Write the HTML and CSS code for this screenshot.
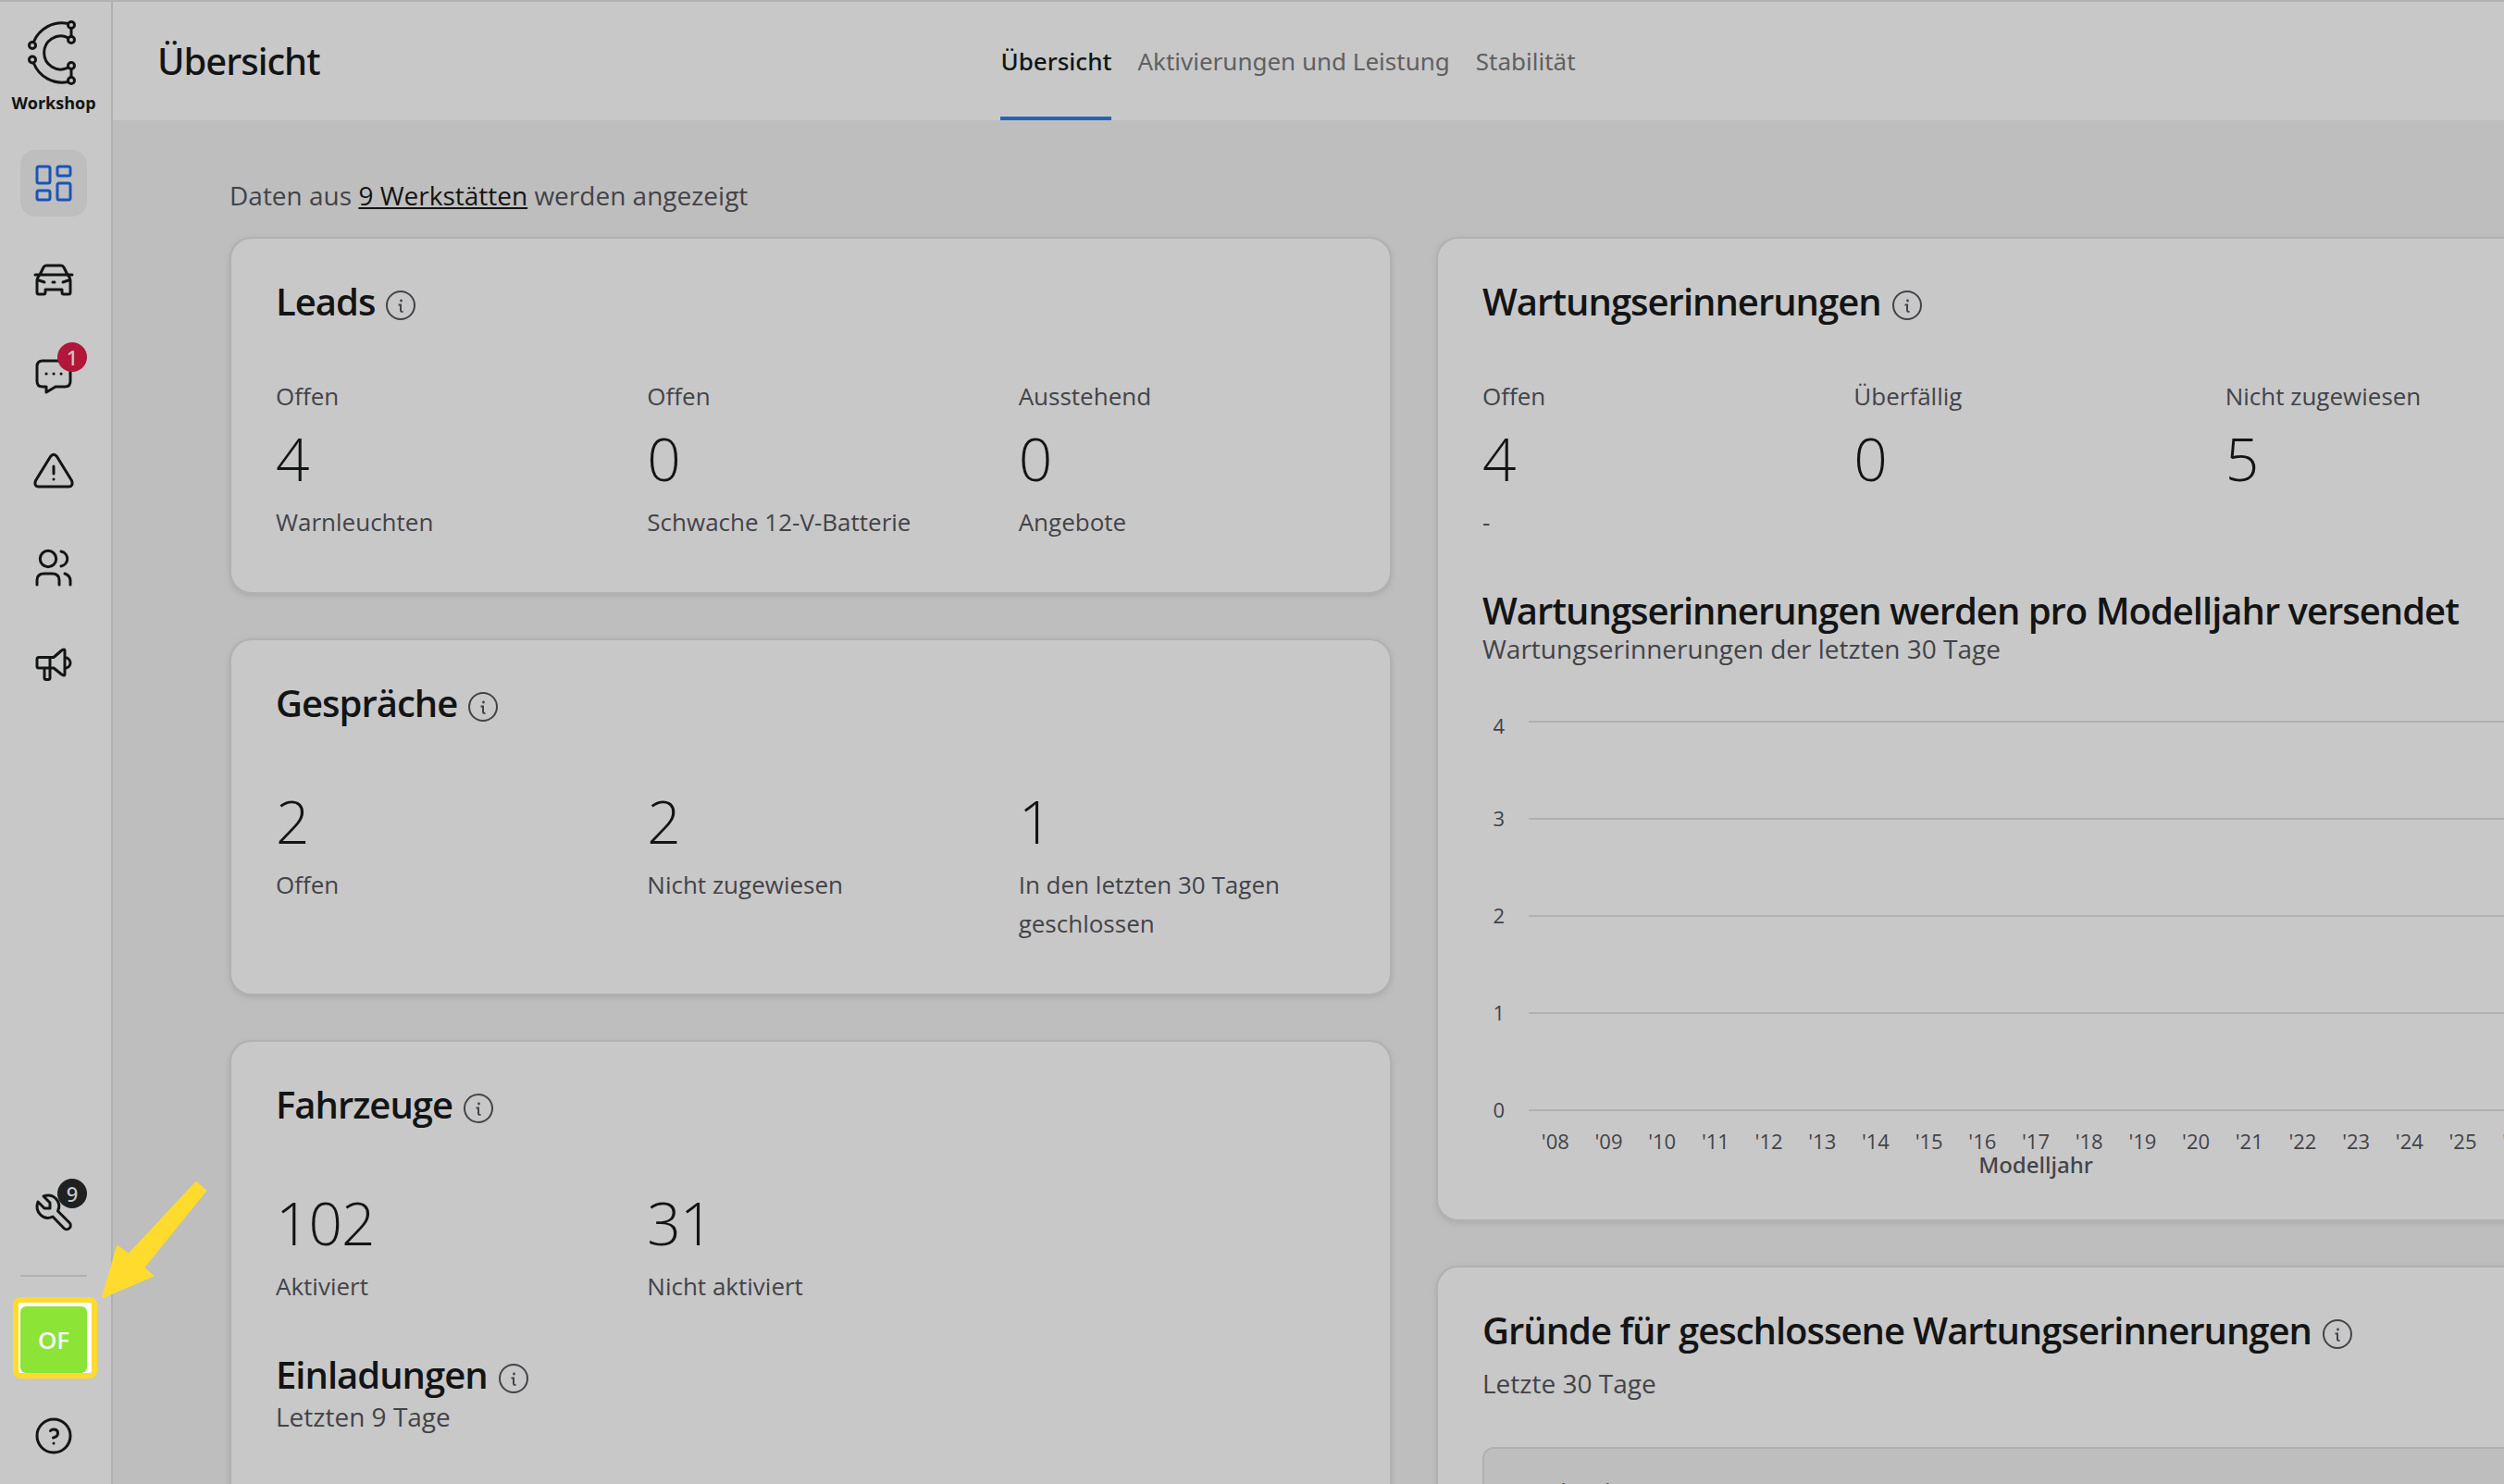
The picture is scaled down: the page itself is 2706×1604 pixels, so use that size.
FILE: index.html
```html
<!DOCTYPE html>
<html lang="de">
<head>
    <meta charset="utf-8">
    <title>Workshop - Übersicht</title>
    <link rel="stylesheet" href="styles.css">
</head>
<body>
    <!-- Icons used more than once -->
    <svg class="sprite" aria-hidden="true">
        <symbol id="info" viewBox="0 0 32 32">
            <circle cx="16" cy="16" r="15" fill="none" stroke="currentColor" stroke-width="2"/>
            <path d="M13.5 15.500h2.500v6q0 1.500 2.500 1.500" fill="none" stroke="currentColor" stroke-width="2"/>
            <circle cx="16.500" cy="11" r="1.400" fill="currentColor"/>
        </symbol>
    </svg>

    <nav class="sidebar">
        <a class="logo" href="#">
            <svg width="56" height="72" viewBox="0 0 56 72" fill="none" stroke="currentColor" stroke-width="3">
                <path d="M6.500 23A33 33 0 0 1 43.500 3.500M6.500 46.500A33 33 0 0 0 43.500 66.500M43.500 18.800A18 18 0 1 0 43.500 51.200M47 8.500v9M47 52.500v9"/>
                <circle cx="47" cy="5" r="3.500"/>
                <circle cx="47" cy="21" r="3.500"/>
                <circle cx="5" cy="27" r="3.500"/>
                <circle cx="5" cy="42.500" r="3.500"/>
                <circle cx="47" cy="49" r="3.500"/>
                <circle cx="47" cy="65" r="3.500"/>
            </svg>
            Workshop
        </a>

        <a class="nav-item active" href="#" aria-label="Übersicht">
            <svg viewBox="0 0 48 48">
                <rect x="6" y="6" width="14" height="18" rx="2"/>
                <rect x="28" y="6" width="14" height="10" rx="2"/>
                <rect x="6" y="32" width="14" height="10" rx="2"/>
                <rect x="28" y="24" width="14" height="18" rx="2"/>
            </svg>
        </a>
        <a class="nav-item" href="#" aria-label="Fahrzeuge">
            <svg viewBox="0 0 48 48">
                <path d="M4 19h40M9 19l4-8q1-2 3-2h16q2 0 3 2l4 8M9 19q-3 3-3 7v12q0 2 2 2h5q2 0 2-2v-3h18v3q0 2 2 2h5q2 0 2-2V26q0-4-3-7M8 25l6 2M40 25l-6 2M23 27h2"/>
            </svg>
        </a>
        <a class="nav-item" href="#" aria-label="Gespräche">
            <svg viewBox="0 0 48 48">
                <path d="M12 8h24q6 0 6 6v16q0 6-6 6H26l-10 6v-6h-4q-6 0-6-6V14q0-6 6-6z"/>
                <path d="M16 22h.1M24 22h.1M32 22h.1"/>
            </svg>
            <span class="badge badge-red">1</span>
        </a>
        <a class="nav-item" href="#" aria-label="Warnungen">
            <svg viewBox="0 0 48 48">
                <path d="M20.500 7.500q3.500-4.500 7 0l16 26q2 6-3 6.500h-33q-5-.5-3-6.500z"/>
                <path d="M24 18v8M24 32v.1"/>
            </svg>
        </a>
        <a class="nav-item" href="#" aria-label="Kunden">
            <svg viewBox="0 0 48 48">
                <circle cx="18" cy="14" r="8.700"/>
                <path d="M6 42v-5q0-7 8-7h8q8 0 8 7v5M32 6c9 2 9 14 0 16M36 30q6 2 6 8v4"/>
            </svg>
        </a>
        <a class="nav-item" href="#" aria-label="Kampagnen">
            <svg viewBox="0 0 48 48">
                <path d="M8 16.500h16l8-7q4-3 4 0v25q0 3-4 0l-8-6.500H8q-2 0-2-2v-7.500q0-2 2-2zM20 16.500v11.500M14 28v10.500q0 2 2 2h2q2 0 2-2V28M36 16.500c8 1 8 11 0 12"/>
            </svg>
        </a>

        <a class="nav-item tools" href="#" aria-label="Werkstatt">
            <svg viewBox="0 0 48 48">
                <path d="M13 7C24 3 33 13 28.500 23L41 35.500a4.200 4.200 0 0 1-6 6L23 29C13 34 3 24 7 13l7 7h6v-6z"/>
            </svg>
            <span class="badge">9</span>
        </a>
        <hr>
        <div class="account">
            <button class="avatar">OF</button>
        </div>
        <a class="nav-item" href="#" aria-label="Hilfe">
            <svg viewBox="0 0 48 48">
                <circle cx="24" cy="24" r="18"/>
                <path d="M20.500 18.500q1-1.500 3.500-1.500 4.500 0 4.500 4t-5 5M24 32v.1"/>
            </svg>
        </a>

        <!-- Pointer to the account button -->
        <svg class="arrow" viewBox="0 0 114 126">
            <path d="M102 1 112 10 45 93 55 102 1 125 17 70 29 79z"/>
        </svg>
    </nav>

    <div class="page">
        <header class="topbar">
            <h1>Übersicht</h1>
            <nav class="tabs">
                <a class="tab selected" href="#">Übersicht</a>
                <a class="tab" href="#">Aktivierungen und Leistung</a>
                <a class="tab" href="#">Stabilität</a>
            </nav>
        </header>

        <main>
            <p class="source">Daten aus <a href="#">9 Werkstätten</a> werden angezeigt</p>

            <div class="columns">
                <div class="column">
                    <section class="card">
                        <h2>Leads <svg class="info"><use href="#info"/></svg></h2>
                        <div class="stats">
                            <div><p>Offen</p><strong>4</strong><p>Warnleuchten</p></div>
                            <div><p>Offen</p><strong>0</strong><p>Schwache 12-V-Batterie</p></div>
                            <div><p>Ausstehend</p><strong>0</strong><p>Angebote</p></div>
                        </div>
                    </section>

                    <section class="card">
                        <h2>Gespräche <svg class="info"><use href="#info"/></svg></h2>
                        <div class="stats">
                            <div><strong>2</strong><p>Offen</p></div>
                            <div><strong>2</strong><p>Nicht zugewiesen</p></div>
                            <div><strong>1</strong><p>In den letzten 30 Tagen geschlossen</p></div>
                        </div>
                    </section>

                    <section class="card tall">
                        <h2>Fahrzeuge <svg class="info"><use href="#info"/></svg></h2>
                        <div class="stats">
                            <div><strong>102</strong><p>Aktiviert</p></div>
                            <div><strong>31</strong><p>Nicht aktiviert</p></div>
                        </div>
                        <h2 class="sub-heading">Einladungen <svg class="info"><use href="#info"/></svg></h2>
                        <p class="period">Letzten 9 Tage</p>
                    </section>
                </div>

                <div class="column">
                    <section class="card">
                        <h2>Wartungserinnerungen <svg class="info"><use href="#info"/></svg></h2>
                        <div class="stats">
                            <div><p>Offen</p><strong>4</strong><p>-</p></div>
                            <div><p>Überfällig</p><strong>0</strong></div>
                            <div><p>Nicht zugewiesen</p><strong>5</strong></div>
                        </div>
                        <h2 class="sub-heading">Wartungserinnerungen werden pro Modelljahr versendet</h2>
                        <p class="period">Wartungserinnerungen der letzten 30 Tage</p>

                        <div class="chart">
                            <div class="chart-row"><span>4</span></div>
                            <div class="chart-row"><span>3</span></div>
                            <div class="chart-row"><span>2</span></div>
                            <div class="chart-row"><span>1</span></div>
                            <div class="chart-row base-row"><span>0</span></div>
                            <div class="years">
                                <span>'08</span><span>'09</span><span>'10</span><span>'11</span><span>'12</span>
                                <span>'13</span><span>'14</span><span>'15</span><span>'16</span><span>'17</span>
                                <span>'18</span><span>'19</span><span>'20</span><span>'21</span><span>'22</span>
                                <span>'23</span><span>'24</span><span>'25</span><span>'26</span>
                            </div>
                            <p class="axis-title">Modelljahr</p>
                        </div>
                    </section>

                    <section class="card">
                        <h2>Gründe für geschlossene Wartungserinnerungen <svg class="info"><use href="#info"/></svg></h2>
                        <p class="period spaced">Letzte 30 Tage</p>
                        <table class="reasons">
                            <tr><th>Beschreibung</th></tr>
                        </table>
                    </section>
                </div>
            </div>
        </main>
    </div>
</body>
</html>
```
FILE: styles.css
```css
* {
    box-sizing: border-box;
}

body {
    margin: 0;
    height: 100vh;
    display: flex;
    overflow: hidden;
    border-top: 2px solid #b1b1b1;
    background-color: #bebebe;
    color: #131415;
    font-family: "Open Sans", "Noto Sans", sans-serif;
    font-size: 26px;
}

h1, h2, p {
    margin: 0;
}

a {
    color: inherit;
    text-decoration: none;
}

.sprite {
    position: absolute;
    width: 0;
    height: 0;
}

/* Sidebar */
.sidebar {
    position: relative;
    flex: 0 0 122px;
    display: flex;
    flex-direction: column;
    align-items: center;
    gap: 32px;
    padding: 20px 4px 16px 0;
    border-right: 2px solid #b1b1b1;
    background-color: #c8c8c8;
}

.logo {
    display: flex;
    flex-direction: column;
    align-items: center;
    gap: 2px;
    margin-bottom: 4px;
    font-size: 18px;
    line-height: 30px;
    font-weight: 700;
}

.nav-item {
    position: relative;
    display: flex;
    align-items: center;
    justify-content: center;
    width: 72px;
    height: 72px;
    border-radius: 16px;
}

.nav-item svg {
    width: 48px;
    height: 48px;
    fill: none;
    stroke: currentColor;
    stroke-width: 3;
    stroke-linecap: round;
    stroke-linejoin: round;
}

.active {
    background-color: #bebebe;
    color: #1a54b8;
}

.badge {
    position: absolute;
    top: 0;
    right: 0;
    width: 32px;
    height: 32px;
    border-radius: 50%;
    background-color: #1f2022;
    color: #c8c8c8;
    font-family: "Noto Sans", sans-serif;
    font-size: 22px;
    line-height: 32px;
    font-weight: 500;
    text-align: center;
}

.badge-red {
    background-color: #b11739;
}

.tools {
    margin-top: auto;
}

hr {
    width: 72px;
    margin: 0;
    border: 0;
    border-top: 2px solid #b1b1b1;
}

.account {
    position: relative;
    isolation: isolate;
    width: 72px;
    height: 72px;
}

/* Highlight frame behind the account button */
.account::before {
    content: "";
    position: absolute;
    inset: -10px -11px -6px -8px;
    z-index: -1;
    border: 6px solid #ffdb2d;
    border-radius: 8px;
    background-color: #ffffff;
}

.avatar {
    width: 72px;
    height: 72px;
    padding: 0;
    border: 0;
    border-radius: 6px;
    background-color: #8ce437;
    color: #ffffff;
    font: 500 26px "Noto Sans", sans-serif;
}

.arrow {
    position: absolute;
    left: 110px;
    bottom: 201px;
    width: 114px;
    height: 126px;
    z-index: 2;
    fill: #ffdb2d;
    stroke: #ffdb2d;
    stroke-width: 2;
    stroke-linejoin: round;
}

/* Header */
.page {
    flex: 1;
    min-width: 0;
}

.topbar {
    display: grid;
    grid-template-columns: 1fr auto 1fr;
    height: 128px;
    padding: 0 92px 0 48px;
    background-color: #c8c8c8;
    font-family: "Noto Sans", sans-serif;
}

h1 {
    align-self: center;
    font-size: 40px;
    line-height: 56px;
    font-weight: 500;
    letter-spacing: -1px;
}

.tabs {
    display: flex;
    gap: 28px;
}

.tab {
    padding-top: 44px;
    border-bottom: 4px solid transparent;
    color: #606060;
    line-height: 40px;
}

.selected {
    border-color: #2362bd;
    color: #131415;
    font-weight: 500;
}

/* Cards */
main {
    padding: 61px 126px;
}

.source {
    margin-bottom: 25px;
    color: #434349;
    font-size: 28px;
    line-height: 40px;
}

.source a {
    color: #131415;
    text-decoration: underline;
}

.columns {
    display: grid;
    grid-template-columns: repeat(2, minmax(1256px, 1fr));
    gap: 48px;
}

.column {
    display: flex;
    flex-direction: column;
    gap: 48px;
}

.card {
    padding: 40px 48px 48px;
    border: 2px solid #b1b1b1;
    border-radius: 24px;
    background-color: #c8c8c8;
    box-shadow: 0 2px 6px #a9a9a9;
}

.tall {
    flex: 1;
}

h2 {
    display: flex;
    align-items: center;
    gap: 12px;
    font-size: 40px;
    line-height: 56px;
    font-weight: 600;
    letter-spacing: -1px;
}

.info {
    width: 32px;
    height: 32px;
    margin-top: 8px;
    color: #434349;
}

.stats {
    display: grid;
    grid-template-columns: repeat(3, 1fr);
    column-gap: 48px;
    margin-top: 53px;
    padding-bottom: 7px;
    color: #434349;
    line-height: 42px;
}

.stats strong {
    display: block;
    color: #131415;
    font-size: 64px;
    line-height: 94px;
    font-weight: 300;
    letter-spacing: -1px;
}

.sub-heading {
    margin-top: 44px;
    line-height: 48px;
}

.sub-heading:has(.info) {
    margin-bottom: 4px;
}

.period {
    color: #434349;
    font-size: 28px;
    line-height: 34px;
}

.spaced {
    margin-top: 12px;
}

/* Chart */
.chart {
    margin-top: 46px;
    margin-bottom: -2px;
    padding-right: 10px;
    color: #434349;
    font-size: 22px;
    line-height: 30px;
}

.chart-row {
    display: flex;
    gap: 26px;
    height: 105px;
}

.chart-row span {
    width: 24px;
    text-align: right;
}

.chart-row:first-child span {
    line-height: 40px;
}

.chart-row::after {
    content: "";
    flex: 1;
    margin-top: 15px;
    border-top: 2px solid #b1b1b1;
}

.base-row {
    height: 36px;
}

.years {
    display: flex;
    margin-left: 50px;
    line-height: 26px;
}

.years span {
    flex: 1;
    text-align: center;
}

.axis-title {
    margin-left: 50px;
    text-align: center;
    font-family: "Noto Sans", sans-serif;
    font-size: 24px;
    line-height: 26px;
    font-weight: 500;
}

.reasons {
    width: 100%;
    margin-top: 52px;
    border: 2px solid #b1b1b1;
    border-radius: 12px;
    border-spacing: 0;
    background-color: #bebebe;
}

.reasons th {
    padding: 25px 26px;
    color: #434349;
    line-height: 42px;
    font-weight: 400;
    text-align: left;
}
```
